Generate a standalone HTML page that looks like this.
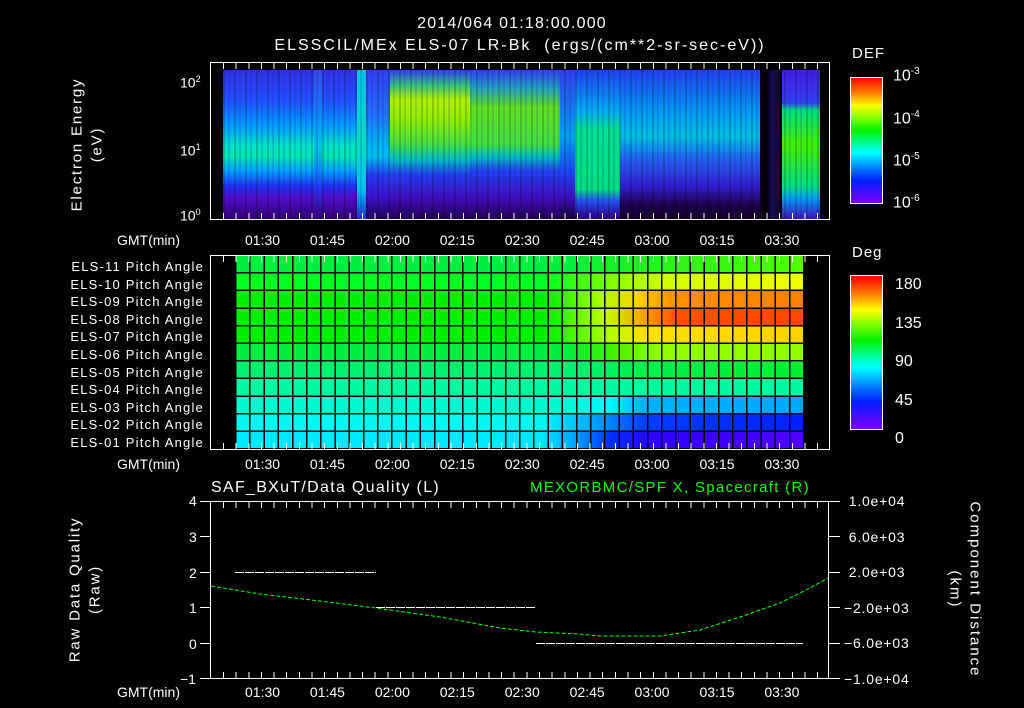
<!DOCTYPE html>
<html><head><meta charset="utf-8"><style>
body{margin:0;background:#000;width:1024px;height:708px;overflow:hidden;position:relative;font-family:"Liberation Sans",sans-serif;color:#fff}
div{position:absolute}
.t{font-size:14px;white-space:nowrap;line-height:1}
.box{border:1.5px solid #fff;box-sizing:border-box}
.tk{background:repeating-linear-gradient(90deg,#fff 0 1px,transparent 1px 12.64px)}
.nz{background:repeating-linear-gradient(90deg,rgba(0,0,0,.18) 0 2px,transparent 2px 5px,rgba(60,0,160,.15) 5px 7px,transparent 7px 11px)}
</style></head><body>
<div class="t" style="left:0;width:1024px;text-align:center;top:16px;font-size:16px;letter-spacing:1.2px">2014/064 01:18:00.000</div>
<div class="t" style="left:0;width:1040px;text-align:center;top:38px;font-size:16px;letter-spacing:2px">ELSSCIL/MEx ELS-07 LR-Bk &nbsp;(ergs/(cm**2-sr-sec-eV))</div>

<!-- Top spectrogram -->
<div style="left:223px;top:70px;width:137px;height:149px;background:linear-gradient(#3030e0 0%,#2050ff 20%,#00a0ff 38%,#00e0c8 50%,#00e8b0 58%,#00a0ff 68%,#2030f0 78%,#5010d0 85%,#300070 100%)"></div>
<div style="left:314px;top:70px;width:8px;height:149px;background:linear-gradient(#3060f0,#00b0f0 50%,#2040f0 80%,#300070);opacity:.6"></div>
<div style="left:357px;top:70px;width:9px;height:149px;background:linear-gradient(#00c0e0,#00e0c0 50%,#00c0f0 80%,#2030d0)"></div>
<div style="left:366px;top:70px;width:24px;height:149px;background:linear-gradient(#3040f0 0%,#2070ff 30%,#00b0f0 48%,#00c0f0 58%,#2040f0 70%,#4010d0 85%,#200050)"></div>
<div style="left:390px;top:70px;width:170px;height:149px;background:linear-gradient(#3040f0 0%,#30c080 10%,#b0f000 20%,#90f000 33%,#40e040 50%,#00c0c0 60%,#2040f0 70%,#4010c0 85%,#200050 100%)"></div>
<div style="left:470px;top:70px;width:90px;height:149px;background:linear-gradient(#3040f0 0%,#20a0c0 12%,#60e020 25%,#40e040 50%,#00c0c0 58%,#2040f0 68%,#4010c0 85%,#200050 100%)"></div>
<div style="left:560px;top:70px;width:15px;height:149px;background:linear-gradient(#3040f0,#00a0f0 45%,#2040f0 70%,#4010c0 85%,#100030)"></div>
<div style="left:575px;top:70px;width:45px;height:149px;background:linear-gradient(#2040f0 0%,#00b0f0 28%,#00e090 40%,#00e080 80%,#2050f0 88%,#300080 100%)"></div>
<div style="left:620px;top:70px;width:140px;height:149px;background:linear-gradient(#2040f0 0%,#00a0f0 30%,#00c0e0 45%,#2060f0 60%,#3020d0 78%,#200050 90%,#100020 100%)"></div>
<div style="left:760px;top:70px;width:22px;height:149px;background:linear-gradient(90deg,#100020,#000 30%,#201060 60%,#000)"></div>
<div style="left:782px;top:70px;width:38px;height:149px;background:linear-gradient(#4020e0 0%,#3040f0 22%,#00e080 27%,#40f000 50%,#00e080 78%,#00a0f0 86%,#4010c0 100%)"></div>
<div class="nz" style="left:223px;top:70px;width:597px;height:149px"></div>
<div class="box" style="left:210px;top:62px;width:620px;height:158px"></div>
<div class="tk" style="left:223px;top:63px;width:600px;height:6px"></div>
<div class="tk" style="left:223px;top:213px;width:600px;height:6px"></div>
<div class="t" style="left:180px;top:75px">10<sup style="font-size:9px">2</sup></div>
<div class="t" style="left:180px;top:143px">10<sup style="font-size:9px">1</sup></div>
<div class="t" style="left:180px;top:208px">10<sup style="font-size:9px">0</sup></div>
<div class="t" style="left:2px;top:137px;width:150px;text-align:center;transform:rotate(-90deg);font-size:15px;letter-spacing:1.8px">Electron Energy</div>
<div class="t" style="left:22px;top:137px;width:150px;text-align:center;transform:rotate(-90deg);font-size:15px;letter-spacing:1.8px">(eV)</div>
<div class="t" style="left:852px;top:46px;font-size:15px;letter-spacing:1px">DEF</div>
<div style="left:850px;top:77px;width:33px;height:127px;border:1px solid #fff;box-sizing:border-box;background:linear-gradient(#ff0000 0%,#ff8000 12%,#ffff00 22%,#80ff00 32%,#00f000 42%,#00ffc0 55%,#00ffff 60%,#0080ff 72%,#0020ff 82%,#8000ff 100%)"></div>
<div class="t" style="left:893px;top:67px;font-size:16px">10<sup style="font-size:10px">-3</sup></div>
<div class="t" style="left:893px;top:110px;font-size:16px">10<sup style="font-size:10px">-4</sup></div>
<div class="t" style="left:893px;top:152px;font-size:16px">10<sup style="font-size:10px">-5</sup></div>
<div class="t" style="left:893px;top:194px;font-size:16px">10<sup style="font-size:10px">-6</sup></div>

<!-- time labels -->
<div class="t" style="left:117px;top:233px">GMT(min)</div>
<div class="t" style="left:245px;top:233px;word-spacing:26px">01:30 01:45 02:00 02:15 02:30 02:45 03:00 03:15 03:30</div>

<!-- Pitch angle -->
<div class="t" style="left:40px;top:258px;text-align:right;width:164px;line-height:17.6px;font-size:13px;letter-spacing:1.2px">ELS-11 Pitch Angle<br>ELS-10 Pitch Angle<br>ELS-09 Pitch Angle<br>ELS-08 Pitch Angle<br>ELS-07 Pitch Angle<br>ELS-06 Pitch Angle<br>ELS-05 Pitch Angle<br>ELS-04 Pitch Angle<br>ELS-03 Pitch Angle<br>ELS-02 Pitch Angle<br>ELS-01 Pitch Angle</div>
<div style="left:235px;top:256px;width:568px;height:193px">
<div style="left:0;top:0;width:100%;height:17.6px;background:linear-gradient(90deg,#00f040 58%,#20f020 70%,#50ff00 100%)"></div>
<div style="left:0;top:17.6px;width:100%;height:17.6px;background:linear-gradient(90deg,#00ff20 55%,#80ff00 66%,#d0ff00 75%,#f0ff00 100%)"></div>
<div style="left:0;top:35.2px;width:100%;height:17.6px;background:linear-gradient(90deg,#00f000 55%,#a0ff00 64%,#ffd000 71%,#ff9000 77%,#ff8000 100%)"></div>
<div style="left:0;top:52.8px;width:100%;height:17.6px;background:linear-gradient(90deg,#00f000 55%,#c0ff00 65%,#ffa000 72%,#ff5000 78%,#ff4800 100%)"></div>
<div style="left:0;top:70.4px;width:100%;height:17.6px;background:linear-gradient(90deg,#00f000 55%,#b0ff00 66%,#ffe000 72%,#ffd000 100%)"></div>
<div style="left:0;top:88px;width:100%;height:17.6px;background:linear-gradient(90deg,#00f040 58%,#40f000 66%,#90ff00 75%,#90ff00 100%)"></div>
<div style="left:0;top:105.6px;width:100%;height:17.6px;background:linear-gradient(90deg,#00f070 60%,#00f050 70%,#00f030 100%)"></div>
<div style="left:0;top:123.2px;width:100%;height:17.6px;background:#00f8a0"></div>
<div style="left:0;top:140.8px;width:100%;height:17.6px;background:linear-gradient(90deg,#00f8d0 58%,#00f8ff 66%,#00b0ff 72%,#00a8ff 100%)"></div>
<div style="left:0;top:158.4px;width:100%;height:17.6px;background:linear-gradient(90deg,#00f8f0 54%,#00b0ff 62%,#0040ff 72%,#0020ff 100%)"></div>
<div style="left:0;top:176px;width:100%;height:17px;background:linear-gradient(90deg,#00e8ff 54%,#00a0ff 60%,#0030ff 66%,#3000ff 74%,#5000ff 100%)"></div>
<div style="left:0;top:0;width:100%;height:100%;background:repeating-linear-gradient(90deg,#000 0 1.5px,transparent 1.5px 14.2px),repeating-linear-gradient(180deg,transparent 0 16.1px,#000 16.1px 17.6px)"></div>
</div>
<div class="box" style="left:210px;top:255px;width:620px;height:195px"></div>
<div class="tk" style="left:223px;top:256px;width:600px;height:6px"></div>
<div class="tk" style="left:223px;top:443px;width:600px;height:6px"></div>
<div class="t" style="left:852px;top:245px;font-size:15px;letter-spacing:1px">Deg</div>
<div style="left:850px;top:275px;width:33px;height:155px;border:1px solid #fff;box-sizing:border-box;background:linear-gradient(#ff0000 0%,#ff8000 12%,#ffff00 22%,#80ff00 32%,#00f000 42%,#00ffc0 55%,#00ffff 60%,#0080ff 72%,#0020ff 82%,#8000ff 100%)"></div>
<div class="t" style="left:895px;top:266px;font-size:16px;line-height:38.6px">180<br>135<br>90<br>45<br>0</div>
<div class="t" style="left:117px;top:457px">GMT(min)</div>
<div class="t" style="left:245px;top:457px;word-spacing:26px">01:30 01:45 02:00 02:15 02:30 02:45 03:00 03:15 03:30</div>

<!-- bottom -->
<div class="t" style="left:211px;top:480px;font-size:16px;letter-spacing:1.3px">SAF_BXuT/Data Quality (L)</div>
<div class="t" style="left:530px;top:480px;font-size:15px;letter-spacing:1.3px;color:#00ff00">MEXORBMC/SPF X, Spacecraft (R)</div>
<div class="box" style="left:210px;top:501px;width:619px;height:178px"></div>
<div class="tk" style="left:223px;top:502px;width:600px;height:6px"></div>
<div class="tk" style="left:223px;top:672px;width:600px;height:6px"></div>
<svg style="position:absolute;left:0;top:0" width="1024" height="708">
<g stroke="#fff" stroke-width="1">
<line x1="200" y1="501.5" x2="211" y2="501.5"/><line x1="200" y1="536.5" x2="211" y2="536.5"/><line x1="200" y1="572.5" x2="211" y2="572.5"/><line x1="200" y1="607.5" x2="211" y2="607.5"/><line x1="200" y1="643.5" x2="211" y2="643.5"/><line x1="200" y1="678.5" x2="211" y2="678.5"/>
<line x1="829" y1="501.5" x2="840" y2="501.5"/><line x1="829" y1="536.5" x2="840" y2="536.5"/><line x1="829" y1="572.5" x2="840" y2="572.5"/><line x1="829" y1="607.5" x2="840" y2="607.5"/><line x1="829" y1="643.5" x2="840" y2="643.5"/><line x1="829" y1="678.5" x2="840" y2="678.5"/>
<line x1="235" y1="572.5" x2="376" y2="572.5" stroke-dasharray="9 1"/>
<line x1="376" y1="607.5" x2="536" y2="607.5" stroke-dasharray="9 1"/>
<line x1="536" y1="643.5" x2="803" y2="643.5" stroke-dasharray="9 1"/>
</g>
<polyline fill="none" stroke="#00ff00" stroke-width="1" stroke-dasharray="4 2" points="211,586 260,594 320,601 376,608 440,617 500,628 536,632 579,634 600,636 660,636 700,630 740,617 780,603 810,588 828,578"/>
</svg>
<div class="t" style="left:189px;top:494px">4</div>
<div class="t" style="left:189px;top:530px">3</div>
<div class="t" style="left:189px;top:566px">2</div>
<div class="t" style="left:189px;top:601px">1</div>
<div class="t" style="left:189px;top:637px">0</div>
<div class="t" style="left:180px;top:672px">−1</div>
<div class="t" style="left:844px;top:484px;font-size:14px;letter-spacing:0.8px;line-height:35.6px">&nbsp;1.0e+04<br>&nbsp;6.0e+03<br>&nbsp;2.0e+03<br>−2.0e+03<br>−6.0e+03<br>−1.0e+04</div>
<div class="t" style="left:-15px;top:582px;width:180px;text-align:center;transform:rotate(-90deg);font-size:15px;letter-spacing:1.8px">Raw Data Quality</div>
<div class="t" style="left:5px;top:582px;width:180px;text-align:center;transform:rotate(-90deg);font-size:15px;letter-spacing:1.8px">(Raw)</div>
<div class="t" style="left:885px;top:582px;width:180px;text-align:center;transform:rotate(90deg);font-size:15px;letter-spacing:2px">Component Distance</div>
<div class="t" style="left:865px;top:582px;width:180px;text-align:center;transform:rotate(90deg);font-size:15px;letter-spacing:2px">(km)</div>
<div class="t" style="left:117px;top:685px">GMT(min)</div>
<div class="t" style="left:245px;top:685px;word-spacing:26px">01:30 01:45 02:00 02:15 02:30 02:45 03:00 03:15 03:30</div>
</body></html>
